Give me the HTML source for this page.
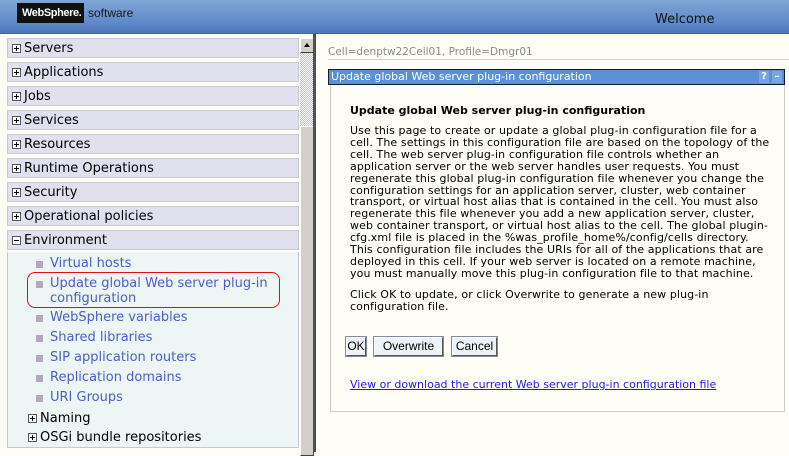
<!DOCTYPE html>
<html><head><meta charset="utf-8"><style>
*{margin:0;padding:0;box-sizing:border-box}
body{width:789px;height:452px;overflow:hidden;background:#fefef6;font-family:"DejaVu Sans","Liberation Sans",sans-serif;position:relative}
#hdr{position:absolute;left:0;top:0;width:789px;height:34px;background:linear-gradient(180deg,#7fa6d6 0%,#6d95cf 40%,#5c86c6 75%,#4e76bb 100%);border-bottom:1px solid #3d64a8}
#logo{position:absolute;left:17px;top:3px;width:67px;height:20px;background:#111;color:#fff;font:bold 11px "Liberation Sans",sans-serif;padding:4px 0 0 5px;letter-spacing:-0.4px;overflow:hidden;white-space:nowrap}
#soft{position:absolute;left:88px;top:6px;color:#1a1a1a;font:12px "Liberation Sans",sans-serif}
#wel{position:absolute;left:655px;top:12px;font-size:13px;color:#111}
#nav{position:absolute;left:0;top:36px;width:300px;height:416px}
.row{position:absolute;left:7px;width:292px;height:20px;background:#e0e0ee;border:1px solid #c8c8d0;font-size:13px;color:#000;line-height:20px;padding-left:16px}
.pm{position:absolute;left:4px;top:5px;width:9px;height:9px;border:1px solid #555;background:#fff}
.pm:before{content:"";position:absolute;left:1px;top:3px;width:5px;height:1px;background:#000}
.pm.p:after{content:"";position:absolute;left:3px;top:1px;width:1px;height:5px;background:#000}
#env{position:absolute;left:7px;top:252px;width:292px;height:196px;background:#edf5f5;border:1px solid #c8c8d0;border-top:none}
.lk{position:absolute;left:50px;font-size:13px;color:#4a60c8;line-height:20px}
.bl{position:absolute;left:36px;width:7px;height:7px;background:#b4a8bc}
.sub{position:absolute;left:40px;font-size:13px;color:#000;line-height:18px}
#sb{position:absolute;left:300px;top:38px;width:14px;height:414px;background:repeating-conic-gradient(#c8c8c8 0 25%,#f4f4f4 0 50%) 0 0/2px 2px}
#up{position:absolute;left:300px;top:38px;width:14px;height:15px;background:#d4d0c8;border:1px solid;border-color:#fff #404040 #404040 #fff}
#up:after{content:"";position:absolute;left:3px;top:4px;border:3px solid transparent;border-bottom:4px solid #000;border-top:none}
#th{position:absolute;left:300px;top:126px;width:14px;height:330px;background:#d4d0c8;border:1px solid;border-color:#fff #404040 #404040 #fff}
#dl{position:absolute;left:313px;top:34px;width:3px;height:418px;background:#505050}
#cell{position:absolute;left:328px;top:46px;font-size:10.5px;color:#8a8a8a;width:461px;border-bottom:1px solid #d0d0d0;padding-bottom:1px}
#tb{position:absolute;left:328px;top:69px;width:457px;height:16px;background:#5a92d8;border:1px solid #102030;color:#fff;font-size:11px;line-height:14px;padding-left:2px}
.ic{position:absolute;top:1px;width:10px;height:12px;background:#7aa6e0;color:#fff;font-size:10px;font-weight:bold;text-align:center;line-height:12px}
#bd{position:absolute;left:330px;top:85px;width:455px;height:327px;border:1px solid #ccc;border-top:none}
#h{position:absolute;left:350px;top:104px;font-size:11px;font-weight:bold;color:#000}
#tx{position:absolute;left:350px;top:125px;font-size:11px;line-height:11.9px;color:#000;white-space:nowrap;letter-spacing:0.1px}
.btn{position:absolute;top:337px;height:19px;background:#eef3f8;border:1px solid;border-color:#fff #555 #555 #fff;outline:1px solid #7c8ca0;font:12px "Liberation Sans",sans-serif;text-align:center;line-height:17px;color:#000}
#lnk{position:absolute;left:350px;top:378px;font-size:11px;color:#2020e0;text-decoration:underline}
#oval{position:absolute;left:27px;top:272px;width:253px;height:36px;border:1px solid #e01010;border-radius:8px}
</style></head><body>
<div id="hdr"><div id="logo">WebSphere.</div><div id="soft">software</div><div id="wel">Welcome</div></div>
<div id="nav">
<div class="row" style="top:2px"><span class="pm p"></span>Servers</div>
<div class="row" style="top:26px"><span class="pm p"></span>Applications</div>
<div class="row" style="top:50px"><span class="pm p"></span>Jobs</div>
<div class="row" style="top:74px"><span class="pm p"></span>Services</div>
<div class="row" style="top:98px"><span class="pm p"></span>Resources</div>
<div class="row" style="top:122px"><span class="pm p"></span>Runtime Operations</div>
<div class="row" style="top:146px"><span class="pm p"></span>Security</div>
<div class="row" style="top:170px"><span class="pm p"></span>Operational policies</div>
<div class="row" style="top:194px"><span class="pm"></span>Environment</div>
</div>
<div id="env"></div>
<div class="bl" style="top:261px"></div><div class="lk" style="top:254px">Virtual hosts</div>
<div class="bl" style="top:281px"></div><div class="lk" style="top:276px;line-height:15px">Update global Web server plug-in<br>configuration</div>
<div class="bl" style="top:315px"></div><div class="lk" style="top:308px">WebSphere variables</div>
<div class="bl" style="top:335px"></div><div class="lk" style="top:328px">Shared libraries</div>
<div class="bl" style="top:355px"></div><div class="lk" style="top:348px">SIP application routers</div>
<div class="bl" style="top:375px"></div><div class="lk" style="top:368px">Replication domains</div>
<div class="bl" style="top:395px"></div><div class="lk" style="top:388px">URI Groups</div>
<span class="pm p" style="top:414px;left:28px"></span><div class="sub" style="top:410px">Naming</div>
<span class="pm p" style="top:433px;left:28px"></span><div class="sub" style="top:429px">OSGi bundle repositories</div>
<div id="oval"></div>
<div id="sb"></div><div id="up"></div><div id="th"></div><div id="dl"></div>
<div id="cell">Cell=denptw22Cell01, Profile=Dmgr01</div>
<div id="tb">Update global Web server plug-in configuration<span class="ic" style="left:430px">?</span><span class="ic" style="left:443px">–</span></div>
<div id="bd"></div>
<div id="h">Update global Web server plug-in configuration</div>
<div id="tx">Use this page to create or update a global plug-in configuration file for a<br>cell. The settings in this configuration file are based on the topology of the<br>cell. The web server plug-in configuration file controls whether an<br>application server or the web server handles user requests. You must<br>regenerate this global plug-in configuration file whenever you change the<br>configuration settings for an application server, cluster, web container<br>transport, or virtual host alias that is contained in the cell. You must also<br>regenerate this file whenever you add a new application server, cluster,<br>web container transport, or virtual host alias to the cell. The global plugin-<br>cfg.xml file is placed in the %was_profile_home%/config/cells directory.<br>This configuration file includes the URIs for all of the applications that are<br>deployed in this cell. If your web server is located on a remote machine,<br>you must manually move this plug-in configuration file to that machine.<div style="margin-top:9px;line-height:12.5px">Click OK to update, or click Overwrite to generate a new plug-in<br>configuration file.</div></div>
<div class="btn" style="left:346px;width:20px">OK</div>
<div class="btn" style="left:374px;width:69px">Overwrite</div>
<div class="btn" style="left:452px;width:45px">Cancel</div>
<div id="lnk">View or download the current Web server plug-in configuration file</div>
</body></html>
